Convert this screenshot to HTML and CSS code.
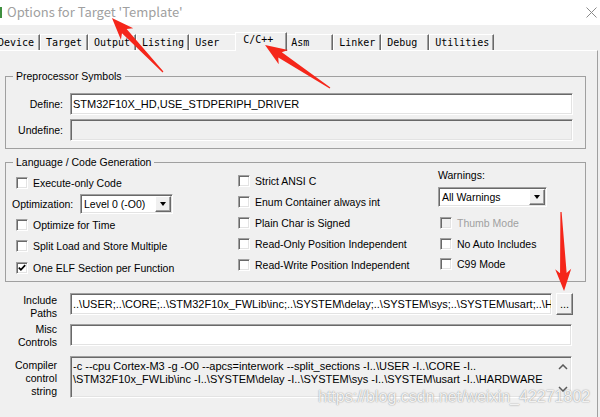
FILE: index.html
```html
<!DOCTYPE html>
<html>
<head>
<meta charset="utf-8">
<title>Options for Target 'Template'</title>
<link rel="stylesheet" href="styles.css">
</head>
<body>
<div class="window">
  <div class="titlebar">
    <span class="app-icon"></span>
    <span class="title">Options for Target 'Template'</span>
    <svg class="close" width="11" height="11" viewBox="0 0 11 11"><path d="M0.5 0.5L10.5 10.5M10.5 0.5L0.5 10.5" stroke="#8a8a8a" stroke-width="1" fill="none"/></svg>
  </div>
  <div class="dialog">
    <div class="tabs">
      <div class="tab">Device</div>
      <div class="tab">Target</div>
      <div class="tab">Output</div>
      <div class="tab">Listing</div>
      <div class="tab">User</div>
      <div class="tab active">C/C++</div>
      <div class="tab">Asm</div>
      <div class="tab">Linker</div>
      <div class="tab">Debug</div>
      <div class="tab">Utilities</div>
    </div>
    <div class="panel">
      <div class="group pre">
        <div class="legend"><span>Preprocessor Symbols</span></div>
        <div class="pre-rows">
          <div class="field-row"><span class="flabel">Define:</span><div class="edit">STM32F10X_HD,USE_STDPERIPH_DRIVER</div></div>
          <div class="field-row"><span class="flabel">Undefine:</span><div class="edit disabled"></div></div>
        </div>
      </div>
      <div class="group lang">
        <div class="legend"><span>Language / Code Generation</span></div>
        <div class="lang-grid">
          <div class="col col-left">
            <div class="chk-row"><span class="chk"></span>Execute-only Code</div>
            <div class="opt-row"><span class="opt-label">Optimization:</span><div class="combo combo-opt"><span class="combo-text">Level 0 (-O0)</span><span class="combo-btn"><i class="tri"></i></span></div></div>
            <div class="chk-row"><span class="chk"></span>Optimize for Time</div>
            <div class="chk-row"><span class="chk"></span>Split Load and Store Multiple</div>
            <div class="chk-row"><span class="chk checked"><svg width="8" height="8" viewBox="0 0 8 8"><path d="M0.8 3.6L2.9 5.8L7.2 1.2" stroke="#000" stroke-width="1.7" fill="none"/></svg></span>One ELF Section per Function</div>
          </div>
          <div class="col col-mid">
            <div class="chk-row"><span class="chk"></span>Strict ANSI C</div>
            <div class="chk-row"><span class="chk"></span>Enum Container always int</div>
            <div class="chk-row"><span class="chk"></span>Plain Char is Signed</div>
            <div class="chk-row"><span class="chk"></span>Read-Only Position Independent</div>
            <div class="chk-row"><span class="chk"></span>Read-Write Position Independent</div>
          </div>
          <div class="col col-right">
            <div class="warn-label">Warnings:</div>
            <div class="combo combo-warn"><span class="combo-text">All Warnings</span><span class="combo-btn"><i class="tri"></i></span></div>
            <div class="right-checks">
              <div class="chk-row disabled-row"><span class="chk dis"></span>Thumb Mode</div>
              <div class="chk-row"><span class="chk"></span>No Auto Includes</div>
              <div class="chk-row"><span class="chk"></span>C99 Mode</div>
            </div>
          </div>
        </div>
      </div>
      <div class="paths">
        <div class="path-row row-inc">
          <div class="plabel lbl-inc">Include<br>Paths</div>
          <div class="edit inc-edit">..\USER;..\CORE;..\STM32F10x_FWLib\inc;..\SYSTEM\delay;..\SYSTEM\sys;..\SYSTEM\usart;..\HARDWARE\LED</div>
          <div class="btn-dots">...</div>
        </div>
        <div class="path-row row-misc">
          <div class="plabel lbl-misc">Misc<br>Controls</div>
          <div class="edit wide"></div>
        </div>
        <div class="path-row row-comp">
          <div class="plabel lbl-comp">Compiler<br>control<br>string</div>
          <div class="cmd">
            <div class="cmd-text">
              <div>-c --cpu Cortex-M3 -g -O0 --apcs=interwork --split_sections -I..\USER -I..\CORE -I..</div>
              <div>\STM32F10x_FWLib\inc -I..\SYSTEM\delay -I..\SYSTEM\sys -I..\SYSTEM\usart -I..\HARDWARE</div>
            </div>
            <div class="scroll">
              <svg width="10" height="6" viewBox="0 0 10 6"><path d="M1 5L5 1L9 5" stroke="#5a5a5a" stroke-width="1.5" fill="none"/></svg>
              <svg width="10" height="6" viewBox="0 0 10 6"><path d="M1 1L5 5L9 1" stroke="#5a5a5a" stroke-width="1.5" fill="none"/></svg>
            </div>
          </div>
        </div>
      </div>
    </div>
  </div>
  <svg class="arrows" width="600" height="417" viewBox="0 0 600 417">
    <g fill="#f5261a">
      <polygon transform="translate(163 72) rotate(226.6)" points="0,-0.6 56.3,-3.2 52.3,-8.5 74.3,0 52.3,8.5 56.3,3.2 0,0.6"/>
      <polygon transform="translate(330 88) rotate(213.5)" points="0,-0.6 59.9,-3.2 55.9,-8.5 77.9,0 55.9,8.5 59.9,3.2 0,0.6"/>
      <polygon transform="translate(561 212) rotate(87.8)" points="0,-0.6 61.1,-3.3 57.1,-8 79.1,0 57.1,8 61.1,3.3 0,0.6"/>
    </g>
  </svg>
  <div class="watermark">https://blog.csdn.net/weixin_42271802</div>
</div>
</body>
</html>
```

FILE: styles.css
```css
* { box-sizing: border-box; }
html, body { margin: 0; padding: 0; }
body {
  width: 600px;
  height: 417px;
  overflow: hidden;
  background: #f0f0f0;
  font-family: "Liberation Sans", Arial, sans-serif;
  font-size: 10.5px;
  color: #000;
}
.window { position: relative; width: 600px; height: 417px; overflow: hidden; }

/* title bar */
.titlebar { height: 25px; background: #fff; display: flex; align-items: center; }
.app-icon { width: 2px; height: 11px; background: #3f8f3f; margin-right: 5px; }
.title {
  font-family: "Noto Sans CJK SC", "Liberation Sans", sans-serif;
  font-size: 13px;
  color: #a0a0a0;
  margin-bottom: 3px;
}
.close { margin-left: auto; margin-right: 3px; }

/* tabs */
.tabs {
  display: flex;
  align-items: flex-end;
  height: 18px;
  margin: 7px 0 0 -8px;
  font-family: "DejaVu Sans Mono", "Liberation Mono", monospace;
  font-size: 10px;
}
.tab {
  height: 16px;
  min-width: 48px;
  padding: 2px 4px 0 5px;
  line-height: 12px;
  border-top: 1px solid #fff;
  border-left: 1px solid #fff;
  border-right: 1px solid #696969;
  box-shadow: inset -1px 0 #a0a0a0;
  white-space: nowrap;
}
.tab.active {
  height: 19px;
  min-width: 52px;
  margin: 0 -2px -1px;
  padding: 1px 6px 0 7px;
  position: relative;
  background: #f0f0f0;
}

/* panel */
.panel {
  width: 598px;
  height: 370px;
  border-top: 1px solid #fff;
  border-right: 1px solid #a0a0a0;
  padding: 25px 11px 0 5px;
}
.group { border: 1px solid #a0a0a0; }
.legend { height: 13px; margin-top: -7px; padding-left: 7px; line-height: 13px; }
.legend span { background: #f0f0f0; padding: 0 3px; }

.pre-rows { margin-top: 10px; padding: 0 12px 7px 0; display: flex; flex-direction: column; gap: 4px; }
.field-row { display: flex; align-items: center; height: 22px; }
.flabel { width: 57px; text-align: right; margin-right: 7px; }

.edit {
  flex: 1;
  height: 22px;
  background: #fff;
  border: 1px solid;
  border-color: #a0a0a0 #fff #fff #a0a0a0;
  box-shadow: inset 1px 1px #696969, inset -1px -1px #e3e3e3;
  padding: 0 0 0 2px;
  font-size: 11px;
  line-height: 20px;
  white-space: nowrap;
  overflow: hidden;
}
.edit.disabled { background: #f0f0f0; }

/* language group */
.lang { margin-top: 13px; }
.lang-grid { display: grid; grid-template-columns: 232px 200px 1fr; height: 112px; }
.col-left { padding: 3px 0 0 6px; }
.col-left .chk-row { height: 21.25px; margin-left: 4px; }
.col-mid { padding-top: 2px; }
.col-mid .chk-row { height: 20.8px; }
.chk-row { display: flex; align-items: center; white-space: nowrap; }
.chk {
  flex: none;
  width: 12px;
  height: 12px;
  margin-right: 5px;
  background: #fff;
  border: 1px solid;
  border-color: #a0a0a0 #fff #fff #a0a0a0;
  box-shadow: inset 1px 1px #696969, inset -1px -1px #e3e3e3;
  display: flex;
  align-items: center;
  justify-content: center;
}
.chk.dis { background: #f0f0f0; }
.disabled-row { color: #a0a0a0; }

.opt-row { display: flex; align-items: center; height: 21.25px; }
.opt-label { width: 68px; }

.combo {
  display: flex;
  align-items: center;
  height: 20px;
  padding: 1px;
  background: #fff;
  border: 1px solid;
  border-color: #a0a0a0 #fff #fff #a0a0a0;
  box-shadow: inset 1px 1px #696969, inset -1px -1px #e3e3e3;
}
.combo-opt { width: 93px; }
.combo-warn { width: 109px; margin-top: 5px; }
.combo-text { flex: 1; padding-left: 2px; white-space: nowrap; }
.combo-btn {
  width: 16px;
  height: 16px;
  background: #f0f0f0;
  border: 1px solid;
  border-color: #fff #696969 #696969 #fff;
  box-shadow: inset -1px -1px #a0a0a0;
  display: flex;
  align-items: center;
  justify-content: center;
}
.tri {
  width: 0;
  height: 0;
  border-left: 3.5px solid transparent;
  border-right: 3.5px solid transparent;
  border-top: 4px solid #000;
}
.warn-label { line-height: 13px; }
.right-checks { margin-top: 5.5px; }
.right-checks .chk-row { height: 20.8px; margin-left: 2px; }

/* bottom rows */
.paths { margin-top: 11px; }
.path-row { display: flex; align-items: flex-start; }
.row-inc { height: 22px; }
.row-misc { height: 22px; margin-top: 9px; }
.row-comp { height: 42px; margin-top: 10px; }
.plabel { flex: none; width: 52px; margin-right: 13px; text-align: right; line-height: 13px; }
.lbl-inc { margin-top: 0.5px; }
.lbl-misc { margin-top: -1.5px; }
.lbl-comp { margin-top: 2.5px; }
.inc-edit { flex: none; width: 482px; }
.edit.wide { flex: none; width: 502px; }
.btn-dots {
  flex: none;
  width: 17px;
  height: 22px;
  margin-left: 4px;
  background: #f0f0f0;
  border: 1px solid;
  border-color: #fff #696969 #696969 #fff;
  box-shadow: inset -1px -1px #a0a0a0;
  text-align: center;
  font-size: 11px;
  line-height: 20px;
}
.cmd {
  flex: none;
  width: 502px;
  height: 42px;
  display: flex;
  background: #f0f0f0;
  border: 1px solid;
  border-color: #a0a0a0 #fff #fff #a0a0a0;
  box-shadow: inset 1px 1px #696969, inset -1px -1px #e3e3e3;
}
.cmd-text {
  flex: 1;
  padding: 2.5px 0 0 2px;
  font-size: 11px;
  line-height: 13px;
  white-space: nowrap;
  overflow: hidden;
}
.scroll {
  width: 16px;
  display: flex;
  flex-direction: column;
  justify-content: space-between;
  align-items: center;
  padding: 7px 0 5px;
}

/* overlays */
.arrows { position: absolute; left: 0; top: 0; pointer-events: none; }
.watermark {
  position: absolute;
  left: 318px;
  top: 388px;
  font-family: "Liberation Sans", Arial, sans-serif;
  font-size: 16px;
  color: rgba(255, 255, 255, 0.88);
  text-shadow: 0 0 1px rgba(0, 0, 0, 0.35), 0 0 2px rgba(0, 0, 0, 0.2);
  white-space: nowrap;
}
```
